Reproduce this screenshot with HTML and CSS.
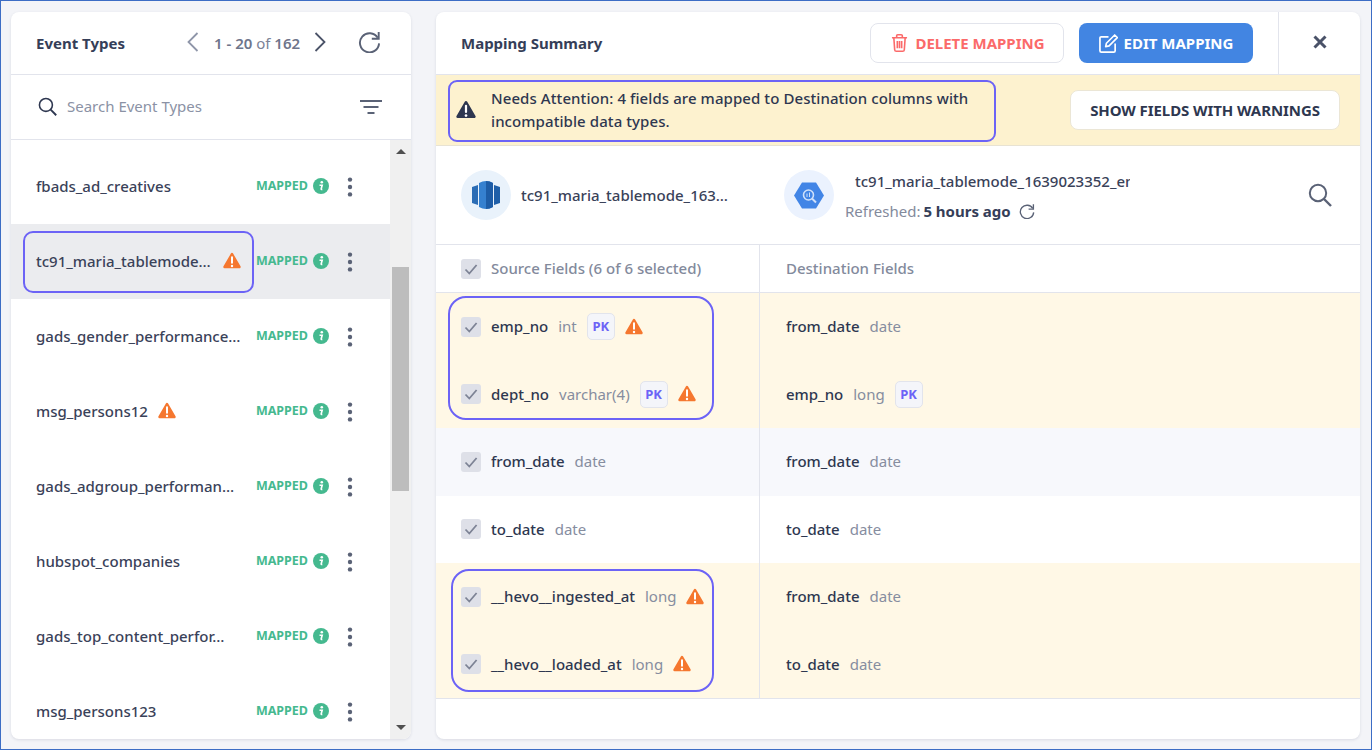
FILE: index.html
```html
<!DOCTYPE html>
<html lang="en">
<head>
<meta charset="utf-8">
<title>Mapping Summary</title>
<link rel="stylesheet" href="styles.css">
</head>
<body>
<svg class="defs" width="0" height="0" aria-hidden="true">
  <symbol id="warn" viewBox="0 0 18 18">
    <path d="M9 2.200 16.400 15H1.600Z" fill="currentColor" stroke="currentColor" stroke-width="2.600" stroke-linejoin="round"/>
    <path d="M9 5.200v5.600" stroke="#fff" stroke-width="2" stroke-linecap="round"/>
    <circle cx="9" cy="14" r="1.200" fill="#fff"/>
  </symbol>
  <symbol id="info" viewBox="0 0 16 16">
    <circle cx="8" cy="8" r="8" fill="#45b98f"/>
    <circle cx="8.800" cy="4.300" r="1.300" fill="#fff"/>
    <path d="M6.500 7.200h2.700l-1 3.500q-.2 1 1.100.7" fill="none" stroke="#fff" stroke-width="1.600"/>
  </symbol>
  <symbol id="kebab" viewBox="0 0 6 20">
    <circle cx="3" cy="2.600" r="2.200"/><circle cx="3" cy="10" r="2.200"/><circle cx="3" cy="17.400" r="2.200"/>
  </symbol>
  <symbol id="check" viewBox="0 0 20 20">
    <path d="M4.500 10.500 8.300 14.500 15.600 6" fill="none" stroke="#7d8395" stroke-width="1.800"/>
  </symbol>
  <symbol id="search" viewBox="0 0 24 24">
    <circle cx="10" cy="10" r="8.200" fill="none" stroke="currentColor" stroke-width="2"/>
    <path d="M16 16l7 7" stroke="currentColor" stroke-width="2.400"/>
  </symbol>
  <symbol id="refresh" viewBox="0 0 24 24">
    <path d="M20.600 8.200A10 10 0 1 0 22 14" fill="none" stroke="currentColor" stroke-width="2"/>
    <path d="M21.600 2v7.200h-7.200" fill="none" stroke="currentColor" stroke-width="2"/>
  </symbol>
  <symbol id="trash" viewBox="0 0 18 20">
    <path d="M1 4.500h16M6 4.500V2.400Q6 1.200 7.200 1.200h3.600q1.200 0 1.200 1.200v2.100M3 4.500l.9 12.600q.1 1.700 1.800 1.700h6.600q1.700 0 1.800-1.700L15 4.500M6.700 8v7.500M9 8v7.500M11.300 8v7.500" fill="none" stroke="currentColor" stroke-width="1.700"/>
  </symbol>
</svg>

<main class="page">
  <aside class="panel events">
    <header class="events-head">
      <h2 class="title">Event Types</h2>
      <div class="pager">
        <svg class="chev chev-off" viewBox="0 0 12 20"><path d="M10.500 1 1.500 10l9 9" fill="none" stroke="currentColor" stroke-width="1.800"/></svg>
        <span class="range"><b>1 - 20</b> of <b>162</b></span>
        <svg class="chev chev-on" viewBox="0 0 12 20"><path d="M1.500 1l9 9-9 9" fill="none" stroke="currentColor" stroke-width="1.800"/></svg>
      </div>
      <svg class="icon-refresh"><use href="#refresh"/></svg>
    </header>
    <div class="events-search">
      <svg class="icon-search-sm"><use href="#search"/></svg>
      <span class="placeholder">Search Event Types</span>
      <svg class="icon-filter" viewBox="0 0 22 14"><path d="M0 1h22M3.500 7h15M7.500 13h7" stroke="currentColor" stroke-width="2"/></svg>
    </div>
    <div class="events-body">
      <ul class="event-list">
        <li class="event"><span class="event-name">fbads_ad_creatives</span><div class="event-meta"><span class="mapped">MAPPED</span><svg class="icon-info"><use href="#info"/></svg><svg class="icon-kebab"><use href="#kebab"/></svg></div></li>
        <li class="event selected"><span class="event-name">tc91_maria_tablemode…</span><svg class="warn warn-event"><use href="#warn"/></svg><span class="note note-event"></span><div class="event-meta"><span class="mapped">MAPPED</span><svg class="icon-info"><use href="#info"/></svg><svg class="icon-kebab"><use href="#kebab"/></svg></div></li>
        <li class="event"><span class="event-name">gads_gender_performance…</span><div class="event-meta"><span class="mapped">MAPPED</span><svg class="icon-info"><use href="#info"/></svg><svg class="icon-kebab"><use href="#kebab"/></svg></div></li>
        <li class="event"><span class="event-name">msg_persons12</span><svg class="warn warn-event"><use href="#warn"/></svg><div class="event-meta"><span class="mapped">MAPPED</span><svg class="icon-info"><use href="#info"/></svg><svg class="icon-kebab"><use href="#kebab"/></svg></div></li>
        <li class="event"><span class="event-name">gads_adgroup_performan…</span><div class="event-meta"><span class="mapped">MAPPED</span><svg class="icon-info"><use href="#info"/></svg><svg class="icon-kebab"><use href="#kebab"/></svg></div></li>
        <li class="event"><span class="event-name">hubspot_companies</span><div class="event-meta"><span class="mapped">MAPPED</span><svg class="icon-info"><use href="#info"/></svg><svg class="icon-kebab"><use href="#kebab"/></svg></div></li>
        <li class="event"><span class="event-name">gads_top_content_perfor…</span><div class="event-meta"><span class="mapped">MAPPED</span><svg class="icon-info"><use href="#info"/></svg><svg class="icon-kebab"><use href="#kebab"/></svg></div></li>
        <li class="event"><span class="event-name">msg_persons123</span><div class="event-meta"><span class="mapped">MAPPED</span><svg class="icon-info"><use href="#info"/></svg><svg class="icon-kebab"><use href="#kebab"/></svg></div></li>
      </ul>
      <div class="scrollbar">
        <span class="arrow arrow-up"></span>
        <span class="thumb"></span>
        <span class="arrow arrow-down"></span>
      </div>
    </div>
  </aside>

  <section class="panel summary">
    <header class="summary-head">
      <h2 class="title">Mapping Summary</h2>
      <button class="btn btn-delete"><svg class="btn-icon-trash"><use href="#trash"/></svg>DELETE MAPPING</button>
      <button class="btn btn-edit">
        <svg class="btn-icon-edit" viewBox="0 0 20 20"><path d="M10 3H2.500Q1 3 1 4.500v13Q1 19 2.500 19h13q1.500 0 1.500-1.500V10" fill="none" stroke="currentColor" stroke-width="1.800"/><path d="M7 13.300l.8-3.600L16.500 1l2.800 2.800-8.700 8.700Z" fill="none" stroke="currentColor" stroke-width="1.700" stroke-linejoin="round"/></svg>
        EDIT MAPPING
      </button>
      <div class="close-box"><svg class="icon-close" viewBox="0 0 14 14"><path d="M1.500 1.500l11 11M12.500 1.500l-11 11" stroke="currentColor" stroke-width="3"/></svg></div>
    </header>

    <div class="banner">
      <svg class="warn-dark"><use href="#warn"/></svg>
      <p class="banner-text">Needs Attention: 4 fields are mapped to Destination columns with incompatible data types.</p>
      <span class="note note-banner"></span>
      <button class="btn btn-show">SHOW FIELDS WITH WARNINGS</button>
    </div>

    <div class="endpoints">
      <div class="endpoint-source">
        <span class="logo-circle logo-source">
          <svg class="logo" viewBox="0 0 28 30">
            <path d="M0 7l6-2v20l-6-2Z" fill="#2a6cb5"/>
            <path d="M28 7l-6-2v20l6-2Z" fill="#1f5fa8"/>
            <path d="M7 3Q14 -1 21 3v24q-7 4-14 0Z" fill="#3580cf"/>
            <path d="M14 1v28q4 0 7-2V3q-3-2-7-2Z" fill="#1d5ca6"/>
          </svg>
        </span>
        <span class="endpoint-name">tc91_maria_tablemode_163…</span>
      </div>
      <div class="endpoint-dest">
        <span class="logo-circle logo-dest">
          <svg class="logo-bq" viewBox="0 0 30 26">
            <path d="M8 0h14l8 13-8 13H8L0 13Z" fill="#4285e6"/>
            <circle cx="14.500" cy="12.500" r="5" fill="none" stroke="#cfe0fa" stroke-width="1.600"/>
            <path d="M18 16l4 4" stroke="#cfe0fa" stroke-width="2"/>
            <path d="M13 11v3.500M15.500 10v4.500" stroke="#cfe0fa" stroke-width="1"/>
          </svg>
        </span>
        <div class="dest-text">
          <span class="dest-name">tc91_maria_tablemode_1639023352_employees</span>
          <span class="dest-refresh">Refreshed: <b>5 hours ago</b><svg class="icon-refresh-sm"><use href="#refresh"/></svg></span>
        </div>
      </div>
      <svg class="icon-search-lg"><use href="#search"/></svg>
    </div>

    <div class="fields">
      <div class="row row-head">
        <div class="cell cell-src"><span class="box"><svg><use href="#check"/></svg></span>Source Fields (6 of 6 selected)</div>
        <div class="cell cell-dst">Destination Fields</div>
      </div>

      <div class="group group-a">
        <span class="note note-group-a"></span>
        <div class="row warned">
          <div class="cell cell-src"><span class="box"><svg><use href="#check"/></svg></span><span class="fname">emp_no</span><span class="ftype">int</span><span class="pk">PK</span><svg class="warn warn-field"><use href="#warn"/></svg></div>
          <div class="cell cell-dst"><span class="fname">from_date</span><span class="ftype">date</span></div>
        </div>
        <div class="row warned">
          <div class="cell cell-src"><span class="box"><svg><use href="#check"/></svg></span><span class="fname">dept_no</span><span class="ftype">varchar(4)</span><span class="pk">PK</span><svg class="warn warn-field"><use href="#warn"/></svg></div>
          <div class="cell cell-dst"><span class="fname">emp_no</span><span class="ftype">long</span><span class="pk">PK</span></div>
        </div>
      </div>

      <div class="row tinted">
        <div class="cell cell-src"><span class="box"><svg><use href="#check"/></svg></span><span class="fname">from_date</span><span class="ftype">date</span></div>
        <div class="cell cell-dst"><span class="fname">from_date</span><span class="ftype">date</span></div>
      </div>
      <div class="row">
        <div class="cell cell-src"><span class="box"><svg><use href="#check"/></svg></span><span class="fname">to_date</span><span class="ftype">date</span></div>
        <div class="cell cell-dst"><span class="fname">to_date</span><span class="ftype">date</span></div>
      </div>

      <div class="group group-b">
        <span class="note note-group-b"></span>
        <div class="row warned">
          <div class="cell cell-src"><span class="box"><svg><use href="#check"/></svg></span><span class="fname">__hevo__ingested_at</span><span class="ftype">long</span><svg class="warn warn-field"><use href="#warn"/></svg></div>
          <div class="cell cell-dst"><span class="fname">from_date</span><span class="ftype">date</span></div>
        </div>
        <div class="row warned">
          <div class="cell cell-src"><span class="box"><svg><use href="#check"/></svg></span><span class="fname">__hevo__loaded_at</span><span class="ftype">long</span><svg class="warn warn-field"><use href="#warn"/></svg></div>
          <div class="cell cell-dst"><span class="fname">to_date</span><span class="ftype">date</span></div>
        </div>
      </div>
    </div>
  </section>
</main>
</body>
</html>
```

FILE: styles.css
```css
* { box-sizing: border-box; }
html, body { margin: 0; height: 100%; }
body {
  font-family: "Noto Sans", "Open Sans", sans-serif;
  font-size: 15px;
  color: #2e3750;
  overflow: hidden;
}
button { font-family: inherit; cursor: pointer; }
h2, p, ul { margin: 0; padding: 0; }
.defs { position: absolute; }

.page {
  height: 750px;
  border: 1px solid #3c6dc5;
  background: #f3f4f8;
  padding: 11px 11px 10px 10px;
  display: flex;
  gap: 25px;
}
.panel {
  background: #fff;
  border-radius: 8px;
  box-shadow: 0 1px 3px rgba(40, 50, 80, .12);
  overflow: hidden;
  display: flex;
  flex-direction: column;
}
.title { font-size: 15px; font-weight: 700; color: #353e58; }

/* left panel */
.events { width: 400px; flex: none; }
.events-head {
  height: 63px;
  flex: none;
  border-bottom: 1px solid #e2e4ec;
  display: flex;
  align-items: center;
  padding: 0 30px 0 25px;
}
.pager {
  margin-left: 62px;
  display: flex;
  align-items: center;
  gap: 15px;
  color: #7b8297;
  flex: 1;
}
.range { white-space: nowrap; }
.range b { font-weight: 600; color: #6e758b; }
.chev { width: 12px; height: 20px; flex: none; margin-top: -2px; }
.chev-off { color: #8f96a9; }
.chev-on { color: #4c5469; margin-left: -1px; }
.icon-refresh { width: 23px; height: 23px; color: #5a6276; flex: none; margin-top: -3px; }

.events-search {
  height: 65px;
  flex: none;
  border-bottom: 1px solid #e2e4ec;
  display: flex;
  align-items: center;
  padding: 0 29px 0 27px;
}
.icon-search-sm { width: 19px; height: 19px; color: #2e3750; flex: none; margin-top: -2px; }
.placeholder { margin-left: 10px; margin-top: -2px; color: #8b92a5; flex: 1; }
.icon-filter { width: 22px; height: 14px; color: #5a6276; flex: none; }

.events-body { flex: 1; min-height: 0; display: flex; }
.event-list {
  list-style: none;
  flex: 1;
  padding-top: 9px;
  overflow: hidden;
}
.event {
  position: relative;
  height: 75px;
  display: flex;
  align-items: center;
  padding: 0 37px 0 25px;
}
.event.selected { background: #ebecef; }
.event-name { font-weight: 500; line-height: 19px; color: #3a4259; white-space: nowrap; }
.selected .event-name { width: 177px; }
.warn { color: #f5772f; flex: none; }
.warn-event { width: 18px; height: 18px; margin-left: 10px; margin-top: -2px; }
.event-meta {
  margin-left: auto;
  display: flex;
  align-items: center;
  flex: none;
}
.mapped {
  font-size: 12.5px;
  font-weight: 700;
  color: #45b98f;
  margin-top: -2px;
}
.icon-info { width: 16px; height: 16px; margin-left: 5px; margin-top: -2px; }
.icon-kebab { width: 6px; height: 20px; margin-left: 18px; fill: #5a6276; }
.note {
  position: absolute;
  border: 2px solid #6c63f6;
  pointer-events: none;
}
.note-event { left: 12px; top: 7px; width: 231px; height: 62px; border-radius: 10px; }

.scrollbar {
  width: 21px;
  flex: none;
  background: #f0f0f0;
  display: flex;
  flex-direction: column;
  align-items: center;
  padding: 9px 0 9px;
}
.arrow { width: 0; height: 0; border-left: 5px solid transparent; border-right: 5px solid transparent; flex: none; }
.arrow-up { border-bottom: 5px solid #505050; }
.arrow-down { border-top: 5px solid #505050; margin-top: auto; }
.thumb { width: 17px; height: 224px; margin-top: 113px; background: #bdbdbd; flex: none; }

/* right panel */
.summary { flex: 1; min-width: 0; }
.summary-head {
  height: 63px;
  flex: none;
  border-bottom: 1px solid #e2e4ec;
  display: flex;
  align-items: center;
  padding-left: 25px;
}
.summary-head .title { flex: 1; }
.btn {
  height: 40px;
  border-radius: 8px;
  font-size: 15px;
  font-weight: 700;
  display: flex;
  align-items: center;
  justify-content: center;
  white-space: nowrap;
  padding: 0;
}
.btn-delete {
  width: 194px;
  background: #fff;
  border: 1px solid #e2e4ec;
  color: #fb6a6a;
  gap: 7px;
  padding-left: 2px;
}
.btn-icon-trash { width: 17px; height: 20px; }
.btn-edit {
  width: 174px;
  margin-left: 15px;
  background: #4285e2;
  border: 0;
  color: #fff;
  gap: 6px;
}
.btn-icon-edit { width: 19px; height: 19px; }
.close-box {
  width: 82px;
  height: 100%;
  margin-left: 25px;
  border-left: 1px solid #e2e4ec;
  display: flex;
  align-items: center;
  justify-content: center;
  flex: none;
}
.icon-close { width: 14px; height: 14px; color: #4a5268; margin-top: -2px; }

.banner {
  position: relative;
  height: 71px;
  flex: none;
  background: #fdf2cf;
  border-bottom: 1px solid #e8e3d3;
  display: flex;
  align-items: center;
  padding: 0 20px 0 20px;
}
.warn-dark { width: 20px; height: 20px; color: #2e3750; flex: none; }
.banner-text {
  width: 495px;
  margin-left: 15px;
  font-weight: 500;
  letter-spacing: .08px;
  line-height: 23px;
  color: #2e3750;
  flex: none;
}
.note-banner { left: 12px; top: 5px; width: 548px; height: 62px; border-radius: 9px; }
.btn-show {
  margin-left: auto;
  width: 270px;
  background: #fff;
  border: 1px solid #ebe6d6;
  color: #2e3750;
  letter-spacing: -.08px;
}

.endpoints {
  height: 99px;
  flex: none;
  border-bottom: 1px solid #e2e4ec;
  display: flex;
  align-items: center;
  padding: 0 28px 0 25px;
}
.endpoint-source { display: flex; align-items: center; width: 323px; flex: none; }
.logo-circle {
  width: 50px;
  height: 50px;
  border-radius: 50%;
  display: flex;
  align-items: center;
  justify-content: center;
  flex: none;
}
.logo-source { background: #e9f2fb; }
.logo-dest { background: #ebf2fe; }
.logo { width: 28px; height: 30px; }
.logo-bq { width: 30px; height: 27px; }
.endpoint-name { margin-left: 10px; font-weight: 500; white-space: nowrap; color: #3a4259; }
.endpoint-dest { display: flex; align-items: center; flex: 1; min-width: 0; }
.dest-text { margin-left: 11px; display: flex; flex-direction: column; gap: 10px; width: 285px; margin-top: 2px; }
.dest-name {
  margin-left: 10px;
  width: 275px;
  overflow: hidden;
  white-space: nowrap;
  font-weight: 500;
  color: #3a4259;
}
.dest-refresh { display: flex; align-items: center; color: #838a9c; white-space: pre; }
.dest-refresh b { font-weight: 700; color: #353e58; margin-left: -1px; }
.icon-refresh-sm { width: 16px; height: 16px; margin-left: 8px; color: #5a6276; }
.icon-search-lg { width: 24px; height: 24px; color: #5a6276; flex: none; }

.fields { flex: 1; min-height: 0; display: flex; flex-direction: column; }
.row { display: flex; height: 67.5px; flex: none; line-height: 19px; }
.row-head { height: 48px; border-bottom: 1px solid #e2e4ec; font-weight: 500; color: #838a9c; }
.group { position: relative; }
.group-b { border-bottom: 1px solid #e2e4ec; }
.warned { background: #fff8e6; }
.tinted { background: #f7f8fc; }
.cell { display: flex; align-items: center; }
.cell-src {
  width: 324px;
  flex: none;
  padding-left: 25px;
  border-right: 1px solid #e2e4ec;
}
.cell-dst { flex: 1; padding-left: 26px; }
.box {
  width: 20px;
  height: 20px;
  margin-right: 10px;
  background: #dee0e8;
  border-radius: 3px;
  flex: none;
  display: flex;
}
.box svg { width: 20px; height: 20px; }
.fname { font-weight: 500; color: #2e3750; white-space: nowrap; }
.ftype { margin-left: 10px; color: #868d9f; white-space: nowrap; }
.pk {
  width: 28px;
  height: 27px;
  margin-left: 10px;
  border: 1px solid #e2e4ec;
  border-radius: 5px;
  background: #f4f5fa;
  color: #6c63f6;
  font-size: 13px;
  font-weight: 700;
  display: flex;
  align-items: center;
  justify-content: center;
  flex: none;
}
.warn-field { width: 18px; height: 18px; margin-left: 10px; }
.note-group-a { left: 12px; top: 3px; width: 266px; height: 124px; border-radius: 18px; }
.note-group-b { left: 15px; top: 6px; width: 263px; height: 123px; border-radius: 18px; }
```
